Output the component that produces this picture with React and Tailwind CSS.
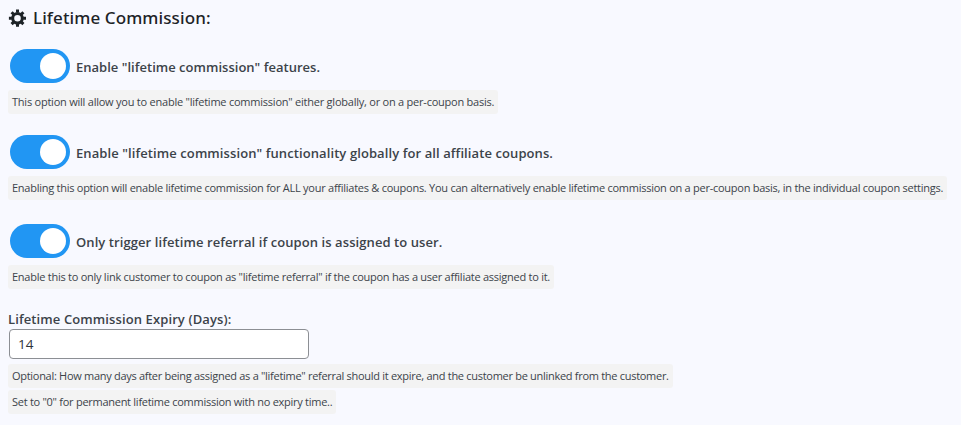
import React, { useState } from 'react'

function GearIcon() {
    return (
        <svg viewBox="0 0 18 18" className="w-[18px] h-[18px]" fill="none" stroke="currentColor">
            <circle cx="9.5" cy="9.2" r="4.8" strokeWidth="3" />
            <path strokeWidth="3" d="M9.5 .6v3M9.5 14.8v3M.9 9.2h3M15.1 9.2h3M3.6 3.3l2 2M13.4 13.1l2 2M15.4 3.3l-2 2M5.6 13.1l-2 2" />
        </svg>
    )
}

function Note({ tracking, children }) {
    return (
        <p className={`w-fit h-6 px-1 rounded-[3px] bg-[#f3f3f3] text-[11px] leading-[24px] whitespace-nowrap ${tracking}`}>{children}</p>
    )
}

function Toggle({ tracking, children }) {
    const [on, setOn] = useState(true);

    return (
        <div className="flex items-center gap-1.5 h-[34px] pl-0.5">
            <button onClick={() => setOn(!on)} className={`w-15 h-[34px] p-1 rounded-full flex ${on ? 'bg-[#2196f3] justify-end' : 'bg-[#cccccc] justify-start'}`}>
                <span className="w-[26px] h-[26px] rounded-full bg-white"></span>
            </button>
            <span className={`pt-[3px] text-[13px] font-semibold whitespace-nowrap ${tracking}`}>{children}</span>
        </div>
    )
}

export default function App() {
    const [days, setDays] = useState('14');

    return (
        <div className="w-full h-screen overflow-hidden bg-[#f8f9ff] text-[#3c434a] font-['Open_Sans','Noto_Sans',sans-serif] pl-2">
            <h2 className="flex items-center gap-[7px] h-[35px] text-[#1d2327] text-[17px] font-medium tracking-[0.1px] font-['Noto_Sans',sans-serif]">
                <GearIcon />
                Lifetime Commission:
            </h2>
            <div className="pt-3.5">
                <Toggle tracking="tracking-[0.02px]">Enable "lifetime commission" features.</Toggle>
            </div>
            <div className="pt-[7px]">
                <Note tracking="tracking-[-0.23px]">This option will allow you to enable "lifetime commission" either globally, or on a per-coupon basis.</Note>
            </div>
            <div className="pt-[21px]">
                <Toggle tracking="tracking-[0.09px]">Enable "lifetime commission" functionality globally for all affiliate coupons.</Toggle>
            </div>
            <div className="pt-[7px]">
                <Note tracking="tracking-[-0.257px]">Enabling this option will enable lifetime commission for ALL your affiliates &amp; coupons. You can alternatively enable lifetime commission on a per-coupon basis, in the individual coupon settings.</Note>
            </div>
            <div className="pt-6">
                <Toggle tracking="tracking-[0.08px]">Only trigger lifetime referral if coupon is assigned to user.</Toggle>
            </div>
            <div className="pt-[7px]">
                <Note tracking="tracking-[-0.255px]">Enable this to only link customer to coupon as "lifetime referral" if the coupon has a user affiliate assigned to it.</Note>
            </div>
            <div className="pt-5">
                <label className="block h-5 text-[13px] leading-5 font-semibold tracking-[0.11px]">Lifetime Commission Expiry (Days):</label>
                <input value={days} onChange={(e) => setDays(e.target.value)} className="block w-[300px] h-[30px] ml-px px-[8px] rounded-[4px] border border-[#8c8f94] bg-white text-[13.5px] text-[#2c3338]" />
            </div>
            <div className="flex flex-col gap-0.5 pt-[5px]">
                <Note tracking="tracking-[-0.29px]">Optional: How many days after being assigned as a "lifetime" referral should it expire, and the customer be unlinked from the customer.</Note>
                <Note tracking="tracking-[-0.27px]">Set to "0" for permanent lifetime commission with no expiry time..</Note>
            </div>
        </div>
    )
}
